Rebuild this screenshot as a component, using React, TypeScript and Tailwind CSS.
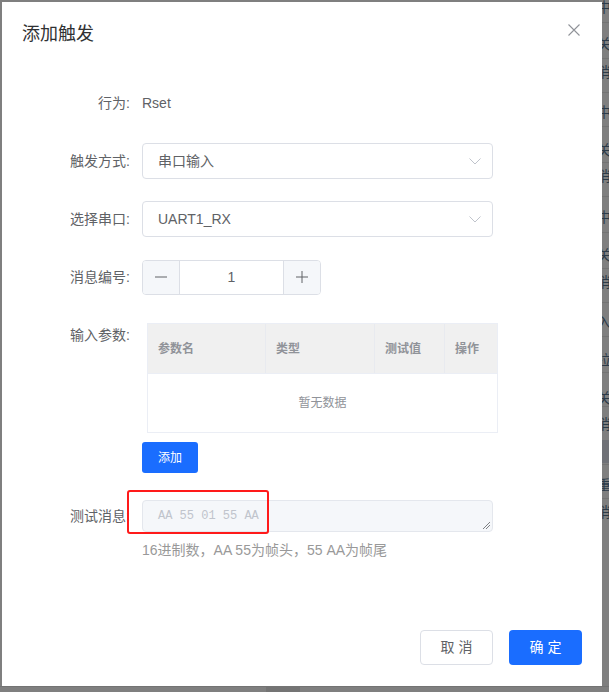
import React from 'react';

const font = { fontFamily: '"Liberation Sans", "Noto Sans CJK SC", sans-serif' };

// fragments of the page behind the mask, peeking out at the right edge
const edgeRows = [
  { y: -3, t: '中' },
  { y: 34, t: '关' },
  { y: 62, t: '消' },
  { y: 102, t: '中' },
  { y: 140, t: '关' },
  { y: 166, t: '消' },
  { y: 207, t: '中' },
  { y: 245, t: '关' },
  { y: 272, t: '消' },
  { y: 312, t: '入' },
  { y: 350, t: '拉' },
  { y: 388, t: '关' },
  { y: 414, t: '消' },
  { y: 475, t: '重' },
  { y: 502, t: '消' },
];
const edgeLines = [22, 58, 92, 126, 162, 196, 232, 268, 302, 336, 372, 406, 440, 464, 498];

const Chevron = () => (
  <svg width="14" height="14" viewBox="0 0 14 14" fill="none" stroke="#c0c4cc" strokeWidth="1">
    <path d="M1.5 4.5 L7 10 L12.5 4.5" />
  </svg>
);

const Row = ({ label, children, top = false }: { label: string; children: React.ReactNode; top?: boolean }) => (
  <div className={`flex ${top ? 'items-start' : 'items-center'} min-h-[40px]`}>
    <div className="w-[120px] pr-3 text-right text-[14px] leading-[40px] text-[#606266] shrink-0">{label}</div>
    <div className="flex-1">{children}</div>
  </div>
);

const Select = ({ value }: { value: string }) => (
  <div className="w-[351px] h-[36px] border border-[#dcdfe6] rounded-[4px] flex items-center justify-between pl-[15px] pr-[10px] text-[14px] text-[#606266]">
    <span>{value}</span>
    <Chevron />
  </div>
);

export default function App() {
  return (
    <div className="relative w-[609px] h-[692px] overflow-hidden bg-[#7f7f7f]" style={font}>
      {/* background page glimpses */}
      {edgeLines.map((y) => (
        <div key={y} className="absolute left-[596px] w-[20px] h-px bg-[#737373]" style={{ top: y }} />
      ))}
      <div className="absolute left-[596px] top-[440px] w-[20px] h-[23px] bg-[#6f7177]" />
      {edgeRows.map((r) => (
        <div key={r.y} className="absolute left-[597px] text-[14px] leading-[20px] text-[#2c3a48]" style={{ top: r.y }}>
          {r.t}
        </div>
      ))}
      <div className="absolute left-0 top-[686px] w-[609px] h-px bg-[#737373]" />
      <div className="absolute left-[266px] top-[686px] w-[34px] h-[6px] bg-[#747474]" />

      {/* dialog */}
      <div className="absolute left-[2px] top-[2px] w-[600px] h-[684px] bg-white flex flex-col">
        <div className="relative px-5 pt-5 pb-[10px]">
          <div className="text-[18px] leading-6 text-[#303133]">添加触发</div>
          <svg className="absolute right-[22px] top-[22px]" width="12" height="12" viewBox="0 0 12 12" stroke="#909399" strokeWidth="1.1">
            <path d="M0.5 0.5 L11.5 11.5 M11.5 0.5 L0.5 11.5" />
          </svg>
        </div>

        <div className="relative pl-5 pt-[27px]">
          <div className="mb-[18px]">
            <Row label="行为:">
              <span className="text-[14px] text-[#606266]">Rset</span>
            </Row>
          </div>
          <div className="mb-[18px]">
            <Row label="触发方式:">
              <Select value="串口输入" />
            </Row>
          </div>
          <div className="mb-[18px]">
            <Row label="选择串口:">
              <Select value="UART1_RX" />
            </Row>
          </div>
          <div className="mb-[18px]">
            <Row label="消息编号:">
              <div className="w-[179px] h-[35px] border border-[#dcdfe6] rounded-[4px] flex overflow-hidden text-[#606266]">
                <div className="w-[37px] bg-[#f5f7fa] border-r border-[#dcdfe6] flex items-center justify-center">
                  <svg width="12" height="12" viewBox="0 0 12 12" stroke="#606266" strokeWidth="1">
                    <path d="M0 6 H12" />
                  </svg>
                </div>
                <div className="flex-1 flex items-center justify-center text-[14px]">1</div>
                <div className="w-[37px] bg-[#f5f7fa] border-l border-[#dcdfe6] flex items-center justify-center">
                  <svg width="12" height="12" viewBox="0 0 12 12" stroke="#606266" strokeWidth="1">
                    <path d="M0 6 H12 M6 0 V12" />
                  </svg>
                </div>
              </div>
            </Row>
          </div>
          <div className="mb-[23px]">
            <Row label="输入参数:" top>
              <div className="pt-2">
                <div className="ml-[5px] w-[351px] border border-[#ebeef5] text-[12px]">
                  <div className="flex h-[49px] bg-[#f0f0f0] font-bold text-[#909399]">
                    <div className="w-[118px] pl-[10px] flex items-center border-r border-[#e8eaef]">参数名</div>
                    <div className="w-[109px] pl-[10px] flex items-center border-r border-[#e8eaef]">类型</div>
                    <div className="w-[70px] pl-[10px] flex items-center border-r border-[#e8eaef]">测试值</div>
                    <div className="flex-1 pl-[10px] flex items-center">操作</div>
                  </div>
                  <div className="h-[59px] border-t border-[#ebeef5] flex items-center justify-center text-[#909399]">
                    暂无数据
                  </div>
                </div>
                <button className="mt-[9px] w-[56px] h-[31px] rounded-[3px] bg-[#1a6dff] text-white text-[12px]">添加</button>
              </div>
            </Row>
          </div>
          <div>
            <Row label="测试消息:" top>
              <div className="pt-1">
                <div className="relative w-[351px] h-[32px] rounded-[4px] border border-[#e4e7ed] bg-[#f5f7fa] px-[15px] flex items-center">
                  <span className="text-[12px] text-[#c0c4cc]" style={{ fontFamily: '"Liberation Mono", monospace' }}>
                    AA 55 01 55 AA
                  </span>
                  <svg className="absolute right-[2px] bottom-[2px]" width="8" height="8" viewBox="0 0 8 8" stroke="#606266" strokeWidth="0.8">
                    <path d="M1 8 L8 1 M4 8 L8 4" />
                  </svg>
                </div>
                <div className="mt-[8px] text-[14px] leading-[20px] text-[#999999]">16进制数，AA 55为帧头，55 AA为帧尾</div>
              </div>
            </Row>
          </div>
          {/* red annotation box */}
          <div className="absolute left-[125px] top-[434px] w-[142px] h-[44px] border-2 border-[#ff1a1a] rounded-[3px]" />
        </div>

        <div className="mt-auto flex justify-end gap-4 pr-5 pb-[21px]">
          <button className="w-[73px] h-[35px] rounded-[4px] border border-[#dcdfe6] bg-white text-[14px] text-[#606266] tracking-[4px] pl-[4px]">
            取消
          </button>
          <button className="w-[73px] h-[35px] rounded-[4px] bg-[#1a6dff] text-[14px] text-white tracking-[4px] pl-[4px]">
            确定
          </button>
        </div>
      </div>
    </div>
  );
}
